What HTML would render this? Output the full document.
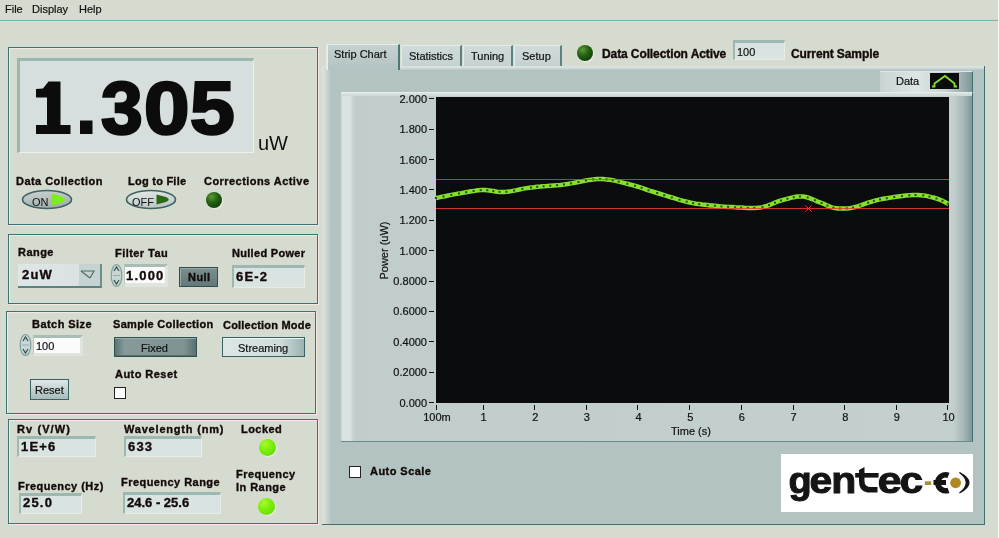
<!DOCTYPE html>
<html><head><meta charset="utf-8">
<style>
*{margin:0;padding:0;box-sizing:border-box}
html,body{width:999px;height:538px;overflow:hidden;background:#d6dbcf;font-family:"Liberation Sans",sans-serif;color:#111;position:relative}
.a{position:absolute;white-space:nowrap}
.t{font-size:11px;line-height:12px;-webkit-text-stroke:0.2px #111}
.b{font-weight:bold;font-size:11px;line-height:12px;letter-spacing:0.45px;color:#140a0a;-webkit-text-stroke:0.35px #140a0a}
.v{font-weight:bold;font-size:13px;line-height:14px;letter-spacing:1.2px;color:#140a0a;-webkit-text-stroke:0.35px #140a0a}
.frame{position:absolute;border:1px solid #3c7272;box-shadow:1px 1px 0 #f4e8e4, inset 1px 1px 0 #f4e8e4}
.ind{position:absolute;background:#d9e3e2;border-top:3px solid #9db8b0;border-left:2px solid #9db8b0;border-right:1px solid #e8ece6;border-bottom:1px solid #e8ece6}
.led{position:absolute;border-radius:50%}
#root{position:absolute;left:0;top:0;width:999px;height:538px;background:#d6dbcf;will-change:transform;overflow:hidden}
</style></head><body><div id="root">

<!-- menu -->
<div class="a t" style="left:5px;top:3px">File</div>
<div class="a t" style="left:32px;top:3px">Display</div>
<div class="a t" style="left:79px;top:3px">Help</div>
<div class="a" style="left:0;top:20px;width:999px;height:1px;background:#6fb2b2"></div>
<div class="a" style="left:0;top:21px;width:999px;height:1px;background:#f6d2d2"></div>

<!-- panel 1 -->
<div class="frame" style="left:8px;top:47px;width:310px;height:178px"></div>
<div class="a" style="left:17px;top:58px;width:237px;height:95px;background:#d6dfdd;border-top:3px solid #98b8b0;border-left:3px solid #98b8b0;border-right:1px solid #eef0ea;border-bottom:1px solid #eef0ea"></div>
<svg class="a" style="left:0;top:0" width="260" height="160"><path d="M36,89 L43,88.5 L48.5,81.5 L60.5,81.5 L60.5,125 L70.5,125 L70.5,134 L36,134 L36,125 L47,125 L47,97.5 L36,97.5 Z" fill="#0c0c0c"/><rect x="80" y="120.5" width="12.5" height="13.5" fill="#0c0c0c"/></svg>
<div class="a" id="d3" style="left:101px;top:63px;font-weight:bold;font-size:75px;line-height:90px;color:#0c0c0c;-webkit-text-stroke:2.6px #0c0c0c">3</div>
<div class="a" id="d0" style="left:144px;top:63px;font-weight:bold;font-size:75px;line-height:90px;color:#0c0c0c;-webkit-text-stroke:2.6px #0c0c0c;transform:scaleX(1.09);transform-origin:left top">0</div>
<div class="a" id="d5" style="left:190px;top:63px;font-weight:bold;font-size:75px;line-height:90px;color:#0c0c0c;-webkit-text-stroke:2.6px #0c0c0c;transform:scaleX(1.07);transform-origin:left top">5</div>
<div class="a" style="left:258px;top:132px;font-size:20px;line-height:22px">uW</div>

<div class="a b" style="left:16px;top:175px">Data Collection</div>
<div class="a b" style="left:128px;top:175px;letter-spacing:0.25px">Log to File</div>
<div class="a b" style="left:204px;top:175px">Corrections Active</div>

<svg class="a" style="left:20px;top:188px" width="56" height="24"><defs><linearGradient id="tg1" x1="0" y1="0" x2="0.3" y2="1"><stop offset="0" stop-color="#cdd4d3"/><stop offset="1" stop-color="#a3afae"/></linearGradient><linearGradient id="tg2" x1="0" y1="0" x2="0.3" y2="1"><stop offset="0" stop-color="#e6ebe9"/><stop offset="1" stop-color="#bdc8c6"/></linearGradient></defs><ellipse cx="27" cy="11.5" rx="24.5" ry="9" fill="url(#tg1)" stroke="#3f6262" stroke-width="1.6"/><path d="M31.5,5.5 L42,8.5 Q48,11.5 42,14.5 L31.5,17.5 Z" fill="#7cee18"/></svg>
<div class="a t" style="left:32px;top:196px;font-size:11px;-webkit-text-stroke:0">ON</div>
<svg class="a" style="left:124px;top:188px" width="56" height="24"><ellipse cx="27" cy="11.5" rx="24.5" ry="9" fill="url(#tg2)" stroke="#3f6262" stroke-width="1.6"/><path d="M32.5,6.5 L42,9 Q47.5,11.5 42,14 L32.5,16.5 Z" fill="#2a6a14"/></svg>
<div class="a t" style="left:132px;top:196px;font-size:11px;-webkit-text-stroke:0">OFF</div>

<div class="led" style="left:206px;top:192px;width:16px;height:16px;background:radial-gradient(circle at 35% 30%,#5a9a3a,#23620f 40%,#0e3a08 85%);box-shadow:1px 1px 1px #f2ece8"></div>

<!-- panel 2 -->
<div class="frame" style="left:8px;top:234px;width:310px;height:70px"></div>
<div class="a b" style="left:18px;top:246px">Range</div>
<div class="a b" style="left:115px;top:247px">Filter Tau</div>
<div class="a b" style="left:232px;top:247px;letter-spacing:0.3px">Nulled Power</div>

<div class="a" style="left:18px;top:264px;width:84px;height:24px;background:linear-gradient(90deg,#dfe6e6,#d8e0e0);border-right:2px solid #6f8f8f;border-bottom:2px solid #5e8080"></div>
<div class="a" style="left:79px;top:264px;width:21px;height:22px;background:#c5d3d1"></div>
<div class="a v" style="left:22px;top:268px">2uW</div>
<svg class="a" style="left:80px;top:270px" width="16" height="10"><polyline points="1,1 14,1 10,8" fill="none" stroke="#506e6e" stroke-width="1.2"/><line x1="1" y1="1" x2="10" y2="8" stroke="#506e6e" stroke-width="1.2"/></svg>

<svg class="a" style="left:110px;top:263px" width="14" height="25"><ellipse cx="6.5" cy="12.5" rx="5.3" ry="11" fill="#c9d6d4" stroke="#7f9f9c" stroke-width="1.2"/><path d="M4,8 L6.5,4 L9,8 M4,17 L6.5,21 L9,17" fill="none" stroke="#2f4f4c" stroke-width="1.2"/><line x1="3" y1="12.5" x2="10" y2="12.5" stroke="#9ab" stroke-width="1"/></svg>
<div class="a" style="left:124px;top:264px;width:44px;height:23px;background:#fcfbfb;border-top:3px solid #a9bdb5;border-left:1px solid #b9c9c3;border-right:3px solid #dfe4de;border-bottom:4px solid #dfe4de"></div>
<div class="a v" style="left:126px;top:269px">1.000</div>
<div class="a" style="left:179px;top:267px;width:39px;height:20px;background:linear-gradient(#7b8e8c,#62797a);border:1px solid #2f4f4f;box-shadow:inset 1px 1px 0 #9aaaaa"></div>
<div class="a b" style="left:188px;top:271px;font-size:11px">Null</div>
<div class="ind" style="left:232px;top:265px;width:73px;height:23px"></div>
<div class="a v" style="left:236px;top:270px">6E-2</div>

<!-- panel 3 -->
<div class="frame" style="left:6px;top:311px;width:310px;height:103px"></div>
<div class="a b" style="left:32px;top:318px">Batch Size</div>
<div class="a b" style="left:113px;top:318px;letter-spacing:0.3px">Sample Collection</div>
<div class="a b" style="left:223px;top:319px;letter-spacing:0.2px">Collection Mode</div>
<svg class="a" style="left:19px;top:333px" width="14" height="25"><ellipse cx="6.5" cy="12" rx="5.3" ry="10.5" fill="#c9d6d4" stroke="#7f9f9c" stroke-width="1.2"/><path d="M4,8 L6.5,4 L9,8 M4,16 L6.5,20 L9,16" fill="none" stroke="#2f4f4c" stroke-width="1.2"/><line x1="3" y1="12" x2="10" y2="12" stroke="#9ab" stroke-width="1"/></svg>
<div class="a" style="left:33px;top:335px;width:50px;height:21px;background:#fcfbfb;border-top:3px solid #a9bdb5;border-left:1px solid #b9c9c3;border-right:3px solid #dfe4de;border-bottom:3px solid #dfe4de"></div>
<div class="a t" style="left:36px;top:340px">100</div>
<div class="a" style="left:114px;top:337px;width:83px;height:20px;background:linear-gradient(90deg,#5d7474,#869a99 12%,#7f9392 85%,#5a7171);border:1px solid #2f5252;box-shadow:inset 0 1px 0 #9aacab,inset 0 -1px 0 #56706f"></div>
<div class="a t" style="left:141px;top:342px">Fixed</div>
<div class="a" style="left:222px;top:337px;width:83px;height:20px;background:linear-gradient(90deg,#dce6e6,#d0dcdc 70%,#9cb2b2);border:1px solid #3a6262;box-shadow:inset 0 1px 0 #eef3f3"></div>
<div class="a t" style="left:238px;top:342px">Streaming</div>
<div class="a b" style="left:115px;top:368px">Auto Reset</div>
<div class="a" style="left:114px;top:387px;width:12px;height:12px;background:#fff;border:1px solid #222"></div>
<div class="a" style="left:30px;top:379px;width:39px;height:21px;background:linear-gradient(#e0e8e8,#a8baba);border:1px solid #3a6262"></div>
<div class="a t" style="left:35px;top:384px">Reset</div>

<!-- panel 4 -->
<div class="frame" style="left:8px;top:419px;width:310px;height:105px"></div>
<div class="a b" style="left:17px;top:423px;letter-spacing:1.1px">Rv (V/W)</div>
<div class="a b" style="left:124px;top:423px;letter-spacing:0.8px">Wavelength (nm)</div>
<div class="a b" style="left:241px;top:423px">Locked</div>
<div class="ind" style="left:17px;top:436px;width:79px;height:21px"></div>
<div class="a v" style="left:21px;top:440px">1E+6</div>
<div class="ind" style="left:124px;top:436px;width:78px;height:21px"></div>
<div class="a v" style="left:128px;top:440px">633</div>
<div class="led" style="left:259px;top:439px;width:17px;height:17px;background:radial-gradient(circle at 35% 30%,#a8f830,#78ee06 45%,#5ed808 90%);box-shadow:1px 1px 1px #f2ece8"></div>

<div class="a b" style="left:18px;top:480px">Frequency (Hz)</div>
<div class="a b" style="left:121px;top:476px">Frequency Range</div>
<div class="a b" style="left:236px;top:468px;line-height:13px">Frequency<br>In Range</div>
<div class="ind" style="left:19px;top:493px;width:63px;height:21px"></div>
<div class="a v" style="left:23px;top:496px">25.0</div>
<div class="ind" style="left:123px;top:492px;width:98px;height:22px"></div>
<div class="a v" style="left:127px;top:496px;letter-spacing:0px">24.6 - 25.6</div>
<div class="led" style="left:258px;top:498px;width:17px;height:17px;background:radial-gradient(circle at 35% 30%,#a8f830,#78ee06 45%,#5ed808 90%);box-shadow:1px 1px 1px #f2ece8"></div>

<!-- right: tabs -->
<div class="a" style="left:401px;top:45px;width:61px;height:21px;background:linear-gradient(#d0dada,#c6d2d2);border-right:2px solid #5a8484;border-top:1px solid #e4ecea;border-left:1px solid #e4ecea"></div>
<div class="a t" style="left:409px;top:50px">Statistics</div>
<div class="a" style="left:463px;top:45px;width:50px;height:21px;background:linear-gradient(#d0dada,#c6d2d2);border-right:2px solid #5a8484;border-top:1px solid #e4ecea;border-left:1px solid #e4ecea"></div>
<div class="a t" style="left:471px;top:50px">Tuning</div>
<div class="a" style="left:514px;top:45px;width:48px;height:21px;background:linear-gradient(#d0dada,#c6d2d2);border-right:2px solid #5a8484;border-top:1px solid #e4ecea;border-left:1px solid #e4ecea"></div>
<div class="a t" style="left:522px;top:50px">Setup</div>

<!-- tab panel body -->
<div class="a" style="left:322px;top:66px;width:663px;height:459px;background:linear-gradient(90deg,#dde2da 0px,#d4dcd8 3px,#c4d0ce 6px,#b3c3c2 9px);border-right:1px solid #3f6f6f;border-bottom:1px solid #3f6f6f"></div>
<div class="a" style="left:325px;top:66px;width:659px;height:4px;background:linear-gradient(#dfe6e4,#d2dcda 50%,#b8c7c6)"></div>
<div class="a" style="left:326px;top:44px;width:74px;height:26px;background:linear-gradient(#c6d2d2,#bac8c8 60%,#b3c3c2);border-left:2px solid #e6ece8;border-top:1px solid #e6ece8;border-right:2px solid #4d7878;border-top-left-radius:2px"></div>
<div class="a t" style="left:334px;top:48px">Strip Chart</div>

<div class="led" style="left:577px;top:45px;width:16px;height:16px;background:radial-gradient(circle at 35% 30%,#5a9a3a,#23620f 40%,#0e3a08 85%);box-shadow:1px 1px 1px #f2ece8"></div>
<div class="a b" style="left:602px;top:47px;font-size:12px;line-height:14px;letter-spacing:-0.1px">Data Collection Active</div>
<div class="ind" style="left:733px;top:40px;width:52px;height:20px"></div>
<div class="a t" style="left:737px;top:46px">100</div>
<div class="a b" style="left:791px;top:47px;font-size:12px;line-height:14px;letter-spacing:-0.1px">Current Sample</div>

<!-- graph frame -->
<div class="a" style="left:341px;top:92px;width:632px;height:350px;background:linear-gradient(90deg,#cad6d5 0px,#dae4e3 2px,#d8e2e1 9px,#c8d4d3 12px,#c0cdcc 15px,#c4d0cf 612px,#a8b9b8 622px,#7f9797 631px);border-top:1px solid #e6eeee;border-bottom:1px solid #6c8a8a;border-right:1px solid #3f6e6e"></div>
<div class="a" style="left:341px;top:93px;width:631px;height:3px;background:linear-gradient(#dbe3e2,#ccd7d6)"></div>
<div class="a" style="left:880px;top:71px;width:93px;height:21px;background:linear-gradient(90deg,#c8d4d4,#dde5e5 40%,#c9d5d5 70%,#a8b9b8 85%,#7f9797);border-right:1px solid #3f6e6e;border-top:1px solid #e0e8e8"></div>
<div class="a t" style="left:896px;top:75px">Data</div>
<div class="a" style="left:930px;top:73px;width:29px;height:16px;background:#0a0c0d"></div>
<svg class="a" style="left:930px;top:73px" width="29" height="16"><polyline points="2,13.5 4.5,13.5 4.5,10.5 15,3 24.5,10.5 24.5,13.5 27,13.5" fill="none" stroke="#84dc2c" stroke-width="1.8"/></svg>

<div class="a" style="left:436px;top:97px;width:513px;height:306px;background:#0a0c0e"></div>
<svg class="a" style="left:0;top:0;font-family:'Liberation Sans',sans-serif;font-size:11px;fill:#111" width="999" height="538" id="chart">
<style>#chart text{stroke:#111;stroke-width:0.2}</style>
<text x="427" y="102.7" text-anchor="end">2.000</text>
<rect x="429" y="98" width="5" height="1" fill="#111"/>
<text x="427" y="133.1" text-anchor="end">1.800</text>
<rect x="429" y="129" width="5" height="1" fill="#111"/>
<text x="427" y="163.5" text-anchor="end">1.600</text>
<rect x="429" y="159" width="5" height="1" fill="#111"/>
<text x="427" y="193.9" text-anchor="end">1.400</text>
<rect x="429" y="189" width="5" height="1" fill="#111"/>
<text x="427" y="224.3" text-anchor="end">1.200</text>
<rect x="429" y="220" width="5" height="1" fill="#111"/>
<text x="427" y="254.6" text-anchor="end">1.000</text>
<rect x="429" y="250" width="5" height="1" fill="#111"/>
<text x="427" y="285.0" text-anchor="end">0.8000</text>
<rect x="429" y="281" width="5" height="1" fill="#111"/>
<text x="427" y="315.4" text-anchor="end">0.6000</text>
<rect x="429" y="311" width="5" height="1" fill="#111"/>
<text x="427" y="345.8" text-anchor="end">0.4000</text>
<rect x="429" y="341" width="5" height="1" fill="#111"/>
<text x="427" y="376.2" text-anchor="end">0.2000</text>
<rect x="429" y="372" width="5" height="1" fill="#111"/>
<text x="427" y="406.6" text-anchor="end">0.000</text>
<rect x="429" y="402" width="5" height="1" fill="#111"/>
<rect x="436" y="405" width="1" height="5" fill="#111"/>
<text x="437.0" y="420.5" text-anchor="middle">100m</text>
<rect x="483" y="405" width="1" height="5" fill="#111"/>
<text x="483.5" y="420.5" text-anchor="middle">1</text>
<rect x="534" y="405" width="1" height="5" fill="#111"/>
<text x="535.2" y="420.5" text-anchor="middle">2</text>
<rect x="586" y="405" width="1" height="5" fill="#111"/>
<text x="586.8" y="420.5" text-anchor="middle">3</text>
<rect x="637" y="405" width="1" height="5" fill="#111"/>
<text x="638.5" y="420.5" text-anchor="middle">4</text>
<rect x="689" y="405" width="1" height="5" fill="#111"/>
<text x="690.2" y="420.5" text-anchor="middle">5</text>
<rect x="741" y="405" width="1" height="5" fill="#111"/>
<text x="741.8" y="420.5" text-anchor="middle">6</text>
<rect x="793" y="405" width="1" height="5" fill="#111"/>
<text x="793.5" y="420.5" text-anchor="middle">7</text>
<rect x="844" y="405" width="1" height="5" fill="#111"/>
<text x="845.2" y="420.5" text-anchor="middle">8</text>
<rect x="896" y="405" width="1" height="5" fill="#111"/>
<text x="896.8" y="420.5" text-anchor="middle">9</text>
<rect x="947" y="405" width="1" height="5" fill="#111"/>
<text x="948.5" y="420.5" text-anchor="middle">10</text>
<text x="691" y="435" text-anchor="middle">Time (s)</text>
<text transform="translate(388,250.5) rotate(-90)" text-anchor="middle" font-size="11">Power (uW)</text>
<polyline points="436.0,198.0 437.4,197.7 439.1,197.4 441.2,196.9 443.5,196.5 446.0,196.0 448.6,195.4 451.3,194.9 454.0,194.4 456.6,193.9 459.0,193.5 461.4,193.1 463.8,192.6 466.2,192.2 468.7,191.8 471.1,191.3 473.6,191.0 476.0,190.6 478.4,190.3 480.7,190.1 483.0,190.0 485.2,190.0 487.3,190.2 489.3,190.4 491.3,190.7 493.3,191.1 495.3,191.4 497.4,191.7 499.5,191.9 501.7,192.0 504.0,192.0 506.4,191.8 508.9,191.5 511.5,191.1 514.1,190.6 516.8,190.1 519.5,189.5 522.3,188.9 525.1,188.4 528.0,187.9 531.0,187.5 534.0,187.2 537.2,186.8 540.4,186.6 543.6,186.3 546.9,186.1 550.3,185.8 553.7,185.5 557.1,185.2 560.6,184.9 564.0,184.5 567.5,184.0 571.1,183.4 574.8,182.7 578.5,182.0 582.2,181.2 585.9,180.5 589.5,179.9 593.1,179.4 596.6,179.1 600.0,179.0 603.3,179.1 606.5,179.4 609.6,179.8 612.7,180.3 615.8,180.9 618.7,181.6 621.6,182.4 624.5,183.1 627.3,183.8 630.0,184.5 632.6,185.2 635.0,185.8 637.3,186.5 639.5,187.2 641.6,187.9 643.8,188.7 646.1,189.5 648.5,190.3 651.1,191.1 654.0,192.0 657.2,193.0 660.6,194.0 664.2,195.2 668.0,196.3 671.8,197.5 675.7,198.7 679.5,199.8 683.2,200.8 686.7,201.7 690.0,202.5 693.1,203.1 696.2,203.7 699.2,204.1 702.1,204.5 704.9,204.8 707.6,205.1 710.2,205.4 712.6,205.6 714.9,205.8 717.0,206.0 718.8,206.2 720.2,206.4 721.4,206.5 722.4,206.6 723.3,206.7 724.2,206.8 725.3,206.8 726.5,206.9 728.1,206.9 730.0,207.0 732.4,207.1 735.1,207.3 738.0,207.4 741.2,207.6 744.5,207.8 747.8,207.9 751.1,207.9 754.3,207.9 757.3,207.8 760.0,207.5 762.5,207.1 764.8,206.5 767.0,205.9 769.0,205.1 771.1,204.3 773.0,203.5 775.0,202.6 776.9,201.8 778.9,201.1 781.0,200.5 783.1,199.9 785.2,199.3 787.4,198.7 789.5,198.2 791.7,197.6 793.8,197.2 795.9,196.8 798.0,196.5 800.0,196.4 802.0,196.4 803.9,196.6 805.8,197.0 807.7,197.5 809.6,198.1 811.4,198.8 813.2,199.5 814.9,200.3 816.6,201.1 818.3,201.8 820.0,202.4 821.6,203.0 823.1,203.6 824.6,204.3 826.1,205.0 827.5,205.6 828.9,206.2 830.4,206.8 831.9,207.3 833.4,207.7 835.0,208.0 836.6,208.2 838.3,208.4 839.9,208.5 841.6,208.6 843.2,208.6 845.0,208.5 846.8,208.4 848.8,208.2 850.8,207.9 853.0,207.5 855.3,207.0 857.7,206.3 860.2,205.5 862.7,204.6 865.4,203.7 868.1,202.7 871.0,201.8 873.9,200.9 876.9,200.1 880.0,199.4 883.3,198.8 886.8,198.2 890.5,197.6 894.3,197.0 898.2,196.5 902.0,196.0 905.7,195.6 909.3,195.3 912.6,195.1 915.6,195.0 918.3,195.0 920.9,195.2 923.2,195.4 925.4,195.7 927.5,196.1 929.5,196.6 931.3,197.1 933.1,197.5 934.8,198.0 936.5,198.5 938.1,199.0 939.7,199.6 941.1,200.2 942.5,200.8 943.8,201.5 945.0,202.1 946.1,202.7 947.0,203.2 947.8,203.7 948.5,204.0" fill="none" stroke="#84e02c" stroke-width="4.5" stroke-linejoin="round"/>
<rect x="435.0" y="197.0" width="2" height="2" fill="#2a4a14"/>
<rect x="442.5" y="195.5" width="2" height="2" fill="#2a4a14"/>
<rect x="450.3" y="193.9" width="2" height="2" fill="#2a4a14"/>
<rect x="458.0" y="192.5" width="2" height="2" fill="#2a4a14"/>
<rect x="465.2" y="191.2" width="2" height="2" fill="#2a4a14"/>
<rect x="472.6" y="190.0" width="2" height="2" fill="#2a4a14"/>
<rect x="479.7" y="189.1" width="2" height="2" fill="#2a4a14"/>
<rect x="486.3" y="189.2" width="2" height="2" fill="#2a4a14"/>
<rect x="492.3" y="190.1" width="2" height="2" fill="#2a4a14"/>
<rect x="498.5" y="190.9" width="2" height="2" fill="#2a4a14"/>
<rect x="505.4" y="190.8" width="2" height="2" fill="#2a4a14"/>
<rect x="513.1" y="189.6" width="2" height="2" fill="#2a4a14"/>
<rect x="521.3" y="187.9" width="2" height="2" fill="#2a4a14"/>
<rect x="530.0" y="186.5" width="2" height="2" fill="#2a4a14"/>
<rect x="536.2" y="185.8" width="2" height="2" fill="#2a4a14"/>
<rect x="542.6" y="185.3" width="2" height="2" fill="#2a4a14"/>
<rect x="549.3" y="184.8" width="2" height="2" fill="#2a4a14"/>
<rect x="556.1" y="184.2" width="2" height="2" fill="#2a4a14"/>
<rect x="563.0" y="183.5" width="2" height="2" fill="#2a4a14"/>
<rect x="570.1" y="182.4" width="2" height="2" fill="#2a4a14"/>
<rect x="577.5" y="181.0" width="2" height="2" fill="#2a4a14"/>
<rect x="584.9" y="179.5" width="2" height="2" fill="#2a4a14"/>
<rect x="592.1" y="178.4" width="2" height="2" fill="#2a4a14"/>
<rect x="599.0" y="178.0" width="2" height="2" fill="#2a4a14"/>
<rect x="605.5" y="178.4" width="2" height="2" fill="#2a4a14"/>
<rect x="611.7" y="179.3" width="2" height="2" fill="#2a4a14"/>
<rect x="617.7" y="180.6" width="2" height="2" fill="#2a4a14"/>
<rect x="626.3" y="182.8" width="2" height="2" fill="#2a4a14"/>
<rect x="634.0" y="184.8" width="2" height="2" fill="#2a4a14"/>
<rect x="640.6" y="186.9" width="2" height="2" fill="#2a4a14"/>
<rect x="647.5" y="189.3" width="2" height="2" fill="#2a4a14"/>
<rect x="656.2" y="192.0" width="2" height="2" fill="#2a4a14"/>
<rect x="663.2" y="194.2" width="2" height="2" fill="#2a4a14"/>
<rect x="670.8" y="196.5" width="2" height="2" fill="#2a4a14"/>
<rect x="678.5" y="198.8" width="2" height="2" fill="#2a4a14"/>
<rect x="685.7" y="200.7" width="2" height="2" fill="#2a4a14"/>
<rect x="692.1" y="202.1" width="2" height="2" fill="#2a4a14"/>
<rect x="698.2" y="203.1" width="2" height="2" fill="#2a4a14"/>
<rect x="706.6" y="204.1" width="2" height="2" fill="#2a4a14"/>
<rect x="713.9" y="204.8" width="2" height="2" fill="#2a4a14"/>
<rect x="720.4" y="205.5" width="2" height="2" fill="#2a4a14"/>
<rect x="727.1" y="205.9" width="2" height="2" fill="#2a4a14"/>
<rect x="734.1" y="206.3" width="2" height="2" fill="#2a4a14"/>
<rect x="740.2" y="206.6" width="2" height="2" fill="#2a4a14"/>
<rect x="746.8" y="206.9" width="2" height="2" fill="#2a4a14"/>
<rect x="753.3" y="206.9" width="2" height="2" fill="#2a4a14"/>
<rect x="761.5" y="206.1" width="2" height="2" fill="#2a4a14"/>
<rect x="768.0" y="204.1" width="2" height="2" fill="#2a4a14"/>
<rect x="774.0" y="201.6" width="2" height="2" fill="#2a4a14"/>
<rect x="780.0" y="199.5" width="2" height="2" fill="#2a4a14"/>
<rect x="786.4" y="197.7" width="2" height="2" fill="#2a4a14"/>
<rect x="792.8" y="196.2" width="2" height="2" fill="#2a4a14"/>
<rect x="799.0" y="195.4" width="2" height="2" fill="#2a4a14"/>
<rect x="806.7" y="196.5" width="2" height="2" fill="#2a4a14"/>
<rect x="813.9" y="199.3" width="2" height="2" fill="#2a4a14"/>
<rect x="820.6" y="202.0" width="2" height="2" fill="#2a4a14"/>
<rect x="826.5" y="204.6" width="2" height="2" fill="#2a4a14"/>
<rect x="832.4" y="206.7" width="2" height="2" fill="#2a4a14"/>
<rect x="838.9" y="207.5" width="2" height="2" fill="#2a4a14"/>
<rect x="845.8" y="207.4" width="2" height="2" fill="#2a4a14"/>
<rect x="852.0" y="206.5" width="2" height="2" fill="#2a4a14"/>
<rect x="859.2" y="204.5" width="2" height="2" fill="#2a4a14"/>
<rect x="867.1" y="201.7" width="2" height="2" fill="#2a4a14"/>
<rect x="872.9" y="199.9" width="2" height="2" fill="#2a4a14"/>
<rect x="879.0" y="198.4" width="2" height="2" fill="#2a4a14"/>
<rect x="885.8" y="197.2" width="2" height="2" fill="#2a4a14"/>
<rect x="893.3" y="196.0" width="2" height="2" fill="#2a4a14"/>
<rect x="901.0" y="195.0" width="2" height="2" fill="#2a4a14"/>
<rect x="908.3" y="194.3" width="2" height="2" fill="#2a4a14"/>
<rect x="914.6" y="194.0" width="2" height="2" fill="#2a4a14"/>
<rect x="922.2" y="194.4" width="2" height="2" fill="#2a4a14"/>
<rect x="928.5" y="195.6" width="2" height="2" fill="#2a4a14"/>
<rect x="935.5" y="197.5" width="2" height="2" fill="#2a4a14"/>
<rect x="941.5" y="199.8" width="2" height="2" fill="#2a4a14"/>
<rect x="946.8" y="202.7" width="2" height="2" fill="#2a4a14"/>
<rect x="436" y="179" width="513" height="1" fill="#f03a30" opacity="0.85"/>
<rect x="436" y="208" width="513" height="1" fill="#f03a30" opacity="0.85"/>
<path d="M805.5,205.5 L811.5,211.5 M811.5,205.5 L805.5,211.5" stroke="#f03a30" stroke-width="1"/>
</svg>

<!-- auto scale -->
<div class="a" style="left:349px;top:466px;width:12px;height:12px;background:#fff;border:1px solid #222"></div>
<div class="a b" style="left:370px;top:465px">Auto Scale</div>

<!-- logo -->
<div class="a" style="left:781px;top:454px;width:192px;height:58px;background:#fff"></div>
<svg class="a" style="left:781px;top:454px" width="192" height="58">
<text transform="translate(7.52,38.6) scale(1.026,1)" font-family="Liberation Sans" font-weight="bold" font-size="37" fill="#161414" stroke="#161414" stroke-width="1">g</text>
<text transform="translate(28.41,38.6) scale(1.101,1)" font-family="Liberation Sans" font-weight="bold" font-size="37" fill="#161414" stroke="#161414" stroke-width="1">e</text>
<text transform="translate(50.32,38.6) scale(1.107,1)" font-family="Liberation Sans" font-weight="bold" font-size="37" fill="#161414" stroke="#161414" stroke-width="1">n</text>
<text transform="translate(96.82,38.6) scale(1.161,1)" font-family="Liberation Sans" font-weight="bold" font-size="37" fill="#161414" stroke="#161414" stroke-width="1">e</text>
<text transform="translate(118.86,38.6) scale(1.134,1)" font-family="Liberation Sans" font-weight="bold" font-size="37" fill="#161414" stroke="#161414" stroke-width="1">c</text>
<path d="M78.0,16.0 L83.5,13.0 L83.5,27.0 Q83.5,33.0 90.0,33.0 L96.5,33.0 L96.5,38.6 L89.0,38.6 Q78.0,38.6 78.0,27.0 Z" fill="#161414"/>
<rect x="74.2" y="19.0" width="23.4" height="4.6" fill="#161414"/>
<rect x="143.8" y="27.3" width="6.4" height="3.7" fill="#a89038"/>
<path d="M167.5,21.3 A8,8 0 1 0 167.5,36.3" fill="none" stroke="#161414" stroke-width="5.5"/>
<rect x="152.5" y="26" width="12.5" height="5" fill="#161414"/>
<circle cx="174.6" cy="28.8" r="5.4" fill="#b08a20"/>
<path d="M178.5,18.5 Q197.5,28.6 178.5,38.9 Q192,28.6 178.5,18.5 Z" fill="#161414" stroke="#161414" stroke-width="1.2"/>
</svg>

<div class="a" style="left:998px;top:0;width:1px;height:538px;background:#fcf8f6"></div>
</div></body></html>
